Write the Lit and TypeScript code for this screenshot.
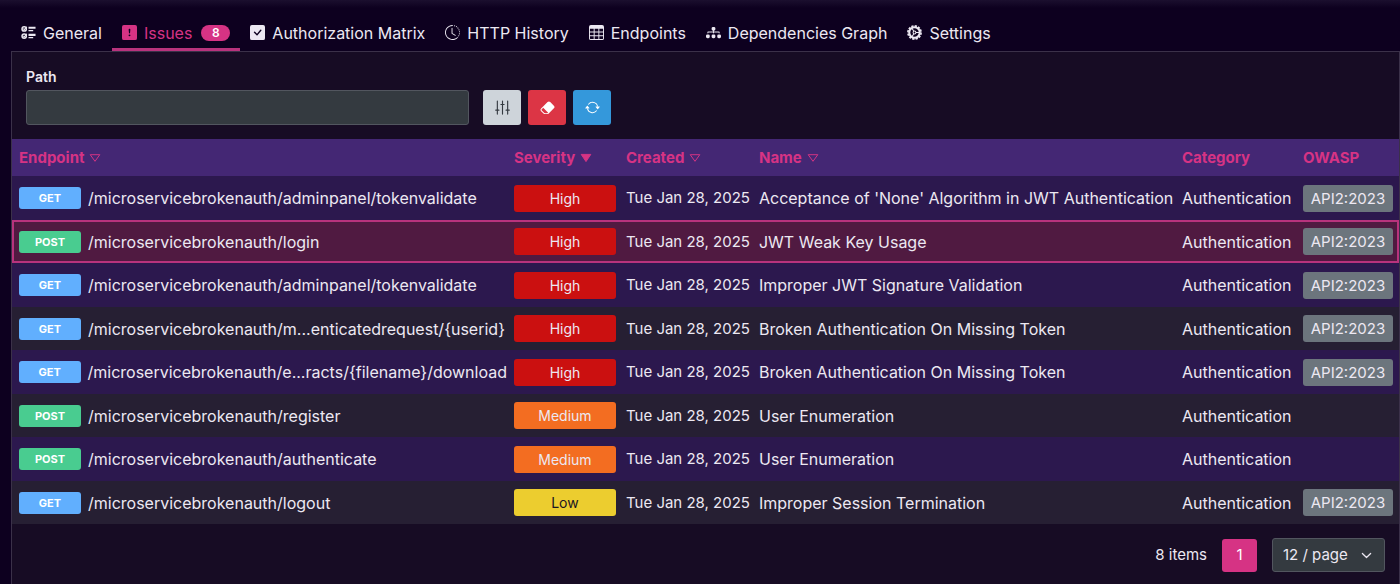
import { LitElement, html, css, svg } from "lit";
import { customElement, property, state } from "lit/decorators.js";
import { classMap } from "lit/directives/class-map.js";

const icons = {
  checklist: svg`
    <g fill="none" stroke="currentColor" stroke-width="1.6" stroke-linecap="round">
      <circle cx="3.4" cy="4.2" r="2.3"/><circle cx="3.4" cy="11.8" r="2.3"/>
      <path d="M2.8 4.2l.7.8L6 2.2M2.8 11.8l.7.8L6 9.8" stroke-width="1.2"/>
    </g>
    <path d="M8 1.8h7.5v2.2H8zM8 5.2h5v1.4H8zM8 9.4h7.5v2.2H8zM8 12.8h5v1.4H8z"/>`,
  exclamation: svg`<path d="M2 0a2 2 0 0 0-2 2v12a2 2 0 0 0 2 2h12a2 2 0 0 0 2-2V2a2 2 0 0 0-2-2zm6 4c.535 0 .954.462.9.995l-.35 3.507a.552.552 0 0 1-1.1 0L7.1 4.995A.905.905 0 0 1 8 4m.002 6a1 1 0 1 1 0 2 1 1 0 0 1 0-2"/>`,
  check: svg`<path d="M2 0a2 2 0 0 0-2 2v12a2 2 0 0 0 2 2h12a2 2 0 0 0 2-2V2a2 2 0 0 0-2-2zm10.03 4.97a.75.75 0 0 1 .011 1.05l-3.992 4.99a.75.75 0 0 1-1.08.02L4.324 8.384a.75.75 0 1 1 1.06-1.06l2.094 2.093 3.473-4.425a.75.75 0 0 1 1.08-.022z"/>`,
  history: svg`
    <path d="M8.515 1.019A7 7 0 0 0 8 1V0a8 8 0 0 1 .589.022zm2.004.45a7 7 0 0 0-.985-.299l.219-.976q.576.129 1.126.342zm1.37.71a7 7 0 0 0-.439-.27l.493-.87a8 8 0 0 1 .979.654l-.615.789a7 7 0 0 0-.418-.302zm1.834 1.79a7 7 0 0 0-.653-.796l.724-.69q.406.429.747.91zm.744 1.352a7 7 0 0 0-.214-.468l.893-.45a8 8 0 0 1 .45 1.088l-.95.313a7 7 0 0 0-.179-.483m.53 2.507a7 7 0 0 0-.1-1.025l.985-.17q.1.58.116 1.17zm-.131 1.538q.05-.254.081-.51l.993.123a8 8 0 0 1-.23 1.155l-.964-.267q.069-.247.12-.501m-.952 2.379q.276-.436.486-.908l.914.405q-.24.54-.555 1.038zm-.964 1.205q.183-.183.35-.378l.758.653a8 8 0 0 1-.401.432z"/>
    <path d="M8 1a7 7 0 1 0 4.95 11.95l.707.707A8.001 8.001 0 1 1 8 0z"/>
    <path d="M7.5 3a.5.5 0 0 1 .5.5v5.21l3.248 1.856a.5.5 0 0 1-.496.868l-3.5-2A.5.5 0 0 1 7 9V3.5a.5.5 0 0 1 .5-.5"/>`,
  table: svg`<path d="M0 2a2 2 0 0 1 2-2h12a2 2 0 0 1 2 2v12a2 2 0 0 1-2 2H2a2 2 0 0 1-2-2zm15 2h-4v3h4zm0 4h-4v3h4zm0 4h-4v3h3a1 1 0 0 0 1-1zm-5 3v-3H6v3zm-5 0v-3H1v2a1 1 0 0 0 1 1zm-4-4h4V8H1zm0-4h4V4H1zm5-3v3h4V4zm4 4H6v3h4z"/>`,
  diagram: svg`<path d="M6 3.5A1.5 1.5 0 0 1 7.5 2h1A1.5 1.5 0 0 1 10 3.5v1A1.5 1.5 0 0 1 8.5 6v1H14a.5.5 0 0 1 .5.5v1a.5.5 0 0 1-1 0V8h-5v.5a.5.5 0 0 1-1 0V8h-5v.5a.5.5 0 0 1-1 0v-1A.5.5 0 0 1 2 7h5.5V6A1.5 1.5 0 0 1 6 4.5zm-6 8A1.5 1.5 0 0 1 1.5 10h1A1.5 1.5 0 0 1 4 11.5v1A1.5 1.5 0 0 1 2.5 14h-1A1.5 1.5 0 0 1 0 12.5zm6 0A1.5 1.5 0 0 1 7.5 10h1a1.5 1.5 0 0 1 1.5 1.5v1A1.5 1.5 0 0 1 8.5 14h-1A1.5 1.5 0 0 1 6 12.5zm6 0a1.5 1.5 0 0 1 1.5-1.5h1a1.5 1.5 0 0 1 1.5 1.5v1a1.5 1.5 0 0 1-1.5 1.5h-1a1.5 1.5 0 0 1-1.5-1.5z"/>`,
  gear: svg`
    <g fill="none" stroke="currentColor">
      <circle cx="8" cy="8" r="5.6" stroke-width="2.2"/>
      <circle cx="8" cy="8" r="7" stroke-width="1.8" stroke-dasharray="2.4 1.265"/>
      <circle cx="8" cy="8" r="1.5" stroke-width="1.1"/>
      <path d="M9.5 8H13M7.2 6.7L5.3 3.4M7.2 9.3l-1.9 3.3" stroke-width="1.1"/>
    </g>`,
  sliders: svg`
    <g fill="none" stroke="currentColor" stroke-linecap="round">
      <path d="M2.5 1v8.5M2.5 12.5V15M8 1v2.5M8 6v9M13.5 1v8.5M13.5 12.5V15M.8 10.8h3.4M6.3 4.8h3.4M11.8 10.8h3.4M2.5 9v4M8 3v4M13.5 9v4" stroke-width="1.2"/>
    </g>`,
  eraser: svg`<path d="M8.086 2.207a2 2 0 0 1 2.828 0l3.879 3.879a2 2 0 0 1 0 2.828l-5.5 5.5A2 2 0 0 1 7.879 15H5.12a2 2 0 0 1-1.414-.586l-2.5-2.5a2 2 0 0 1 0-2.828zm.66 11.34L3.453 8.254 1.914 9.793a1 1 0 0 0 0 1.414l2.5 2.5a1 1 0 0 0 .707.293H7.88a1 1 0 0 0 .707-.293z"/>`,
  refresh: svg`<path d="M11.534 7h3.932a.25.25 0 0 1 .192.41l-1.966 2.36a.25.25 0 0 1-.384 0l-1.966-2.36a.25.25 0 0 1 .192-.41m-11 2h3.932a.25.25 0 0 0 .192-.41L2.692 6.23a.25.25 0 0 0-.384 0L.342 8.59A.25.25 0 0 0 .534 9"/><path d="M8 3c-1.552 0-2.94.707-3.857 1.818a.5.5 0 1 1-.771-.636A6.002 6.002 0 0 1 13.917 7H12.9A5 5 0 0 0 8 3M3.1 9a5.002 5.002 0 0 0 8.757 2.182.5.5 0 1 1 .771.636A6.002 6.002 0 0 1 2.083 9z"/>`,
  triangle: svg`<path d="M1.6 3.6h12.8L8 12.4z" fill="none" stroke="currentColor" stroke-width="1.3" stroke-linejoin="round"/>`,
  triangleFill: svg`<path d="M1.6 3.2h12.8L8 12.8z" stroke="currentColor" stroke-width="1.3" stroke-linejoin="round"/>`,
  chevron: svg`<path d="M2 5l6 6 6-6" fill="none" stroke="currentColor" stroke-width="1.8" stroke-linecap="round" stroke-linejoin="round"/>`,
};
type IconName = keyof typeof icons;

@customElement("ui-icon")
export class UiIcon extends LitElement {
  static styles = css`
    :host { display: block; flex: none; width: 15px; height: 15px; }
    .glyph { display: block; width: 100%; height: 100%; fill: currentColor; }
  `;
  @property() name: IconName = "check";
  render() {
    return html`<svg class="glyph" viewBox="0 0 16 16" aria-hidden="true">${icons[this.name]}</svg>`;
  }
}

interface Issue {
  method: "GET" | "POST";
  path: string;
  severity: "High" | "Medium" | "Low";
  name: string;
  owasp?: string;
}

const BASE = "/microservicebrokenauth/";
const issues: Issue[] = [
  { method: "GET", path: "adminpanel/tokenvalidate", severity: "High", name: "Acceptance of 'None' Algorithm in JWT Authentication", owasp: "API2:2023" },
  { method: "POST", path: "login", severity: "High", name: "JWT Weak Key Usage", owasp: "API2:2023" },
  { method: "GET", path: "adminpanel/tokenvalidate", severity: "High", name: "Improper JWT Signature Validation", owasp: "API2:2023" },
  { method: "GET", path: "m...enticatedrequest/{userid}", severity: "High", name: "Broken Authentication On Missing Token", owasp: "API2:2023" },
  { method: "GET", path: "e...racts/{filename}/download", severity: "High", name: "Broken Authentication On Missing Token", owasp: "API2:2023" },
  { method: "POST", path: "register", severity: "Medium", name: "User Enumeration" },
  { method: "POST", path: "authenticate", severity: "Medium", name: "User Enumeration" },
  { method: "GET", path: "logout", severity: "Low", name: "Improper Session Termination", owasp: "API2:2023" },
];

const tabs: { label: string; icon: IconName; count?: number }[] = [
  { label: "General", icon: "checklist" },
  { label: "Issues", icon: "exclamation", count: 8 },
  { label: "Authorization Matrix", icon: "check" },
  { label: "HTTP History", icon: "history" },
  { label: "Endpoints", icon: "table" },
  { label: "Dependencies Graph", icon: "diagram" },
  { label: "Settings", icon: "gear" },
];

const columns: { label: string; cls: string; sort?: IconName }[] = [
  { label: "Endpoint", cls: "c-endpoint", sort: "triangle" },
  { label: "Severity", cls: "c-severity", sort: "triangleFill" },
  { label: "Created", cls: "c-created", sort: "triangle" },
  { label: "Name", cls: "c-name", sort: "triangle" },
  { label: "Category", cls: "c-category" },
  { label: "OWASP", cls: "c-owasp" },
];

@customElement("app-root")
export class AppRoot extends LitElement {
  static styles = css`
    :host {
      display: flex;
      flex-direction: column;
      box-sizing: border-box;
      min-height: 100vh;
      padding: 14px 0 0 11px;
      background: linear-gradient(#1b0f2e, #0d001f 8px);
      color: #ece8f2;
      font: 15px/20px Inter, "Noto Sans", sans-serif;
    }
    * { box-sizing: border-box; }
    button, input, select { font: inherit; color: inherit; margin: 0; }
    button { border: 0; background: none; padding: 0; cursor: pointer; }

    .tabs { display: flex; font-size: 16px; }
    .tab {
      display: flex;
      align-items: center;
      gap: 7px;
      height: 37px;
      padding: 3px 10px 0;
      border-bottom: 3px solid transparent;
      white-space: nowrap;
    }
    .tab.active { color: #d63384; border-bottom-color: #b8337d; }
    .count {
      min-width: 29px;
      margin-left: 2px;
      border-radius: 8px;
      background: #d63384;
      color: #fff;
      font-size: 12px;
      font-weight: 600;
      line-height: 16px;
      text-align: center;
    }

    .panel {
      flex: 1;
      border: 1px solid #3b3149;
      border-bottom: 0;
      background: #170c24;
    }
    .filters {
      display: flex;
      align-items: flex-end;
      gap: 7px;
      padding: 15px 14px 14px;
    }
    .field {
      display: flex;
      flex-direction: column;
      gap: 3px;
      width: 32.6%;
      margin-right: 7px;
      font-size: 14px;
      font-weight: 600;
    }
    .input {
      width: 100%;
      height: 35px;
      border: 1px solid #52565f;
      border-radius: 3px;
      background: #343a40;
      padding: 0 10px;
      outline: none;
    }
    .action {
      display: grid;
      place-items: center;
      width: 38px;
      height: 35px;
      border-radius: 3px;
      color: #fff;
    }
    .action.options { background: #ced4da; color: #343a40; }
    .action.clear { background: #dc3545; }
    .action.reload { background: #3498db; }

    .grid { width: 100%; table-layout: fixed; border-collapse: collapse; }
    .c-severity { width: 112px; }
    .c-created { width: 133px; }
    .c-name { width: 30.5%; }
    .c-category { width: 121px; }
    .c-owasp { width: 103px; }
    .head { height: 37px; background: #442774; color: #d63384; }
    .th { padding: 0 0 0 7px; text-align: left; font-weight: 700; }
    .sort { display: flex; align-items: center; gap: 5px; }
    .sort ui-icon { width: 12px; height: 12px; }
    .row { height: 44px; background: #2c184e; }
    .row:nth-child(even) { height: 43px; background: #261f33; }
    .row.row.selected { background: #501a41; outline: 2px solid #b8337d; outline-offset: -2px; }
    .td { padding: 0 0 0 7px; white-space: nowrap; }
    .td.text { font-size: 16px; }
    .endpoint { display: flex; align-items: center; gap: 7px; }
    .method {
      width: 62px;
      border-radius: 3px;
      color: #fff;
      font-size: 11px;
      font-weight: 700;
      line-height: 22px;
      text-align: center;
    }
    .method.get { background: #61affe; }
    .method.post { background: #49cc90; }
    .severity {
      width: 102px;
      border-radius: 3px;
      font-size: 14px;
      line-height: 27px;
      text-align: center;
    }
    .severity.high { background: #cb1010; }
    .severity.medium { background: #f36d21; }
    .severity.low { background: #eccd2f; color: #1b1523; }
    .owasp {
      width: 90px;
      border-radius: 3px;
      background: #6c757d;
      line-height: 27px;
      text-align: center;
    }

    .pager {
      display: flex;
      align-items: center;
      justify-content: flex-end;
      gap: 15px;
      padding: 14px 14px 11px;
    }
    .page {
      width: 35px;
      height: 33px;
      border-radius: 3px;
      background: #d63384;
      color: #fff;
    }
    .size { display: grid; align-items: center; width: 113px; }
    .size .select, .size ui-icon { grid-area: 1 / 1; }
    .size .select {
      appearance: none;
      width: 100%;
      height: 34px;
      border: 1px solid #52565f;
      border-radius: 3px;
      background: #343a40;
      padding: 0 10px;
    }
    .size ui-icon {
      width: 11px;
      height: 11px;
      justify-self: end;
      margin-right: 13px;
      pointer-events: none;
    }
  `;

  @state() private tab = "Issues";
  @state() private selected = 1;

  render() {
    return html`
      <nav class="tabs" role="tablist">
        ${tabs.map((t) => html`
          <button
            class=${classMap({ tab: true, active: t.label === this.tab })}
            role="tab"
            aria-selected=${t.label === this.tab}
            @click=${() => (this.tab = t.label)}
          ><ui-icon name=${t.icon}></ui-icon><span>${t.label}</span>${t.count ? html`<span class="count">${t.count}</span>` : ""}</button>`)}
      </nav>
      <main class="panel">
        <form class="filters" @submit=${(e: Event) => e.preventDefault()}>
          <label class="field">Path<input class="input" type="text" name="path" /></label>
          <button class="action options" type="button" aria-label="Filter options"><ui-icon name="sliders"></ui-icon></button>
          <button class="action clear" type="reset" aria-label="Clear filter"><ui-icon name="eraser"></ui-icon></button>
          <button class="action reload" type="button" aria-label="Reload"><ui-icon name="refresh"></ui-icon></button>
        </form>
        <table class="grid">
          <thead>
            <tr class="head">
              ${columns.map((c) => html`<th class="th ${c.cls}" scope="col">${c.sort
                ? html`<button class="sort">${c.label}<ui-icon name=${c.sort}></ui-icon></button>`
                : c.label}</th>`)}
            </tr>
          </thead>
          <tbody>
            ${issues.map((r, i) => html`
              <tr class=${classMap({ row: true, selected: i === this.selected })} @click=${() => (this.selected = i)}>
                <td class="td text"><div class="endpoint"><span class="method ${r.method.toLowerCase()}">${r.method}</span><span>${BASE}${r.path}</span></div></td>
                <td class="td"><div class="severity ${r.severity.toLowerCase()}">${r.severity}</div></td>
                <td class="td">Tue Jan 28, 2025</td>
                <td class="td text">${r.name}</td>
                <td class="td text">Authentication</td>
                <td class="td">${r.owasp ? html`<div class="owasp">${r.owasp}</div>` : ""}</td>
              </tr>`)}
          </tbody>
        </table>
        <footer class="pager">
          <span>8 items</span>
          <button class="page" aria-current="page">1</button>
          <div class="size">
            <select class="select" aria-label="Items per page">
              <option>12 / page</option>
              <option>24 / page</option>
              <option>48 / page</option>
            </select>
            <ui-icon name="chevron"></ui-icon>
          </div>
        </footer>
      </main>
    `;
  }
}
